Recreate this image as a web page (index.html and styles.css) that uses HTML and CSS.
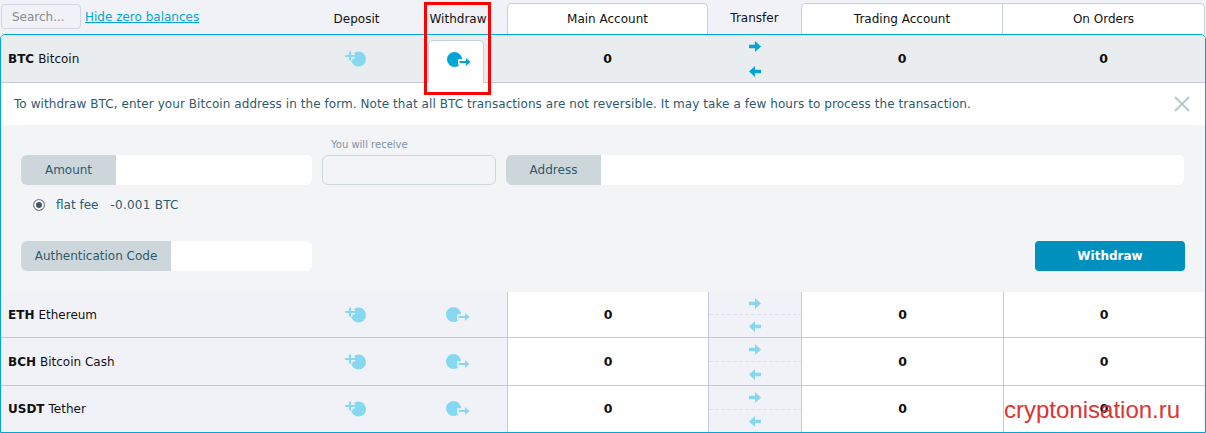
FILE: index.html
```html
<!DOCTYPE html>
<html lang="en">
<head>
<meta charset="utf-8">
<title>Balances</title>
<link rel="stylesheet" href="styles.css">
</head>
<body>
<svg class="defs" width="0" height="0">
  <symbol id="dep" viewBox="0 0 24 16">
    <circle cx="14.5" cy="8" r="7.5" fill="currentColor"/>
    <path d="M1 5h10M6 0.6v8.8" stroke="var(--halo)" stroke-width="5" fill="none"/>
    <path d="M1 5h10M6 0.6v8.8" stroke="currentColor" stroke-width="2.2" fill="none"/>
  </symbol>
  <symbol id="wd" viewBox="0 0 24 16">
    <circle cx="7.5" cy="7.5" r="7.5" fill="currentColor"/>
    <path d="M11 10h8" stroke="var(--halo)" stroke-width="5.4" fill="none"/>
    <path d="M12.5 10h7" stroke="currentColor" stroke-width="2" fill="none"/>
    <path d="M19 6.1l4.5 3.9-4.5 3.9z" fill="currentColor"/>
  </symbol>
  <symbol id="ar" viewBox="0 0 12 11">
    <path d="M0 3.7h6V0l6 5.5-6 5.5V7.3H0z" fill="currentColor"/>
  </symbol>
  <symbol id="al" viewBox="0 0 12 11">
    <path d="M12 3.7H6V0L0 5.5 6 11V7.3h6z" fill="currentColor"/>
  </symbol>
</svg>

<header class="head grid">
  <div class="tools"><input class="search" placeholder="Search..."><a class="hide" href="#">Hide zero balances</a></div>
  <div class="hc">Deposit</div>
  <div class="hc">Withdraw</div>
  <div class="tab">Main Account</div>
  <div class="hc hc-tr">Transfer</div>
  <div class="tab">Trading Account</div>
  <div class="tab tab-last">On Orders</div>
</header>

<main class="table">
  <div class="row grid row-open">
    <div class="coin"><b>BTC</b> Bitcoin</div>
    <div class="ico ico-dep"><svg class="i-coin"><use href="#dep"/></svg></div>
    <div class="ico"><div class="active-tab"><svg class="i-coin"><use href="#wd"/></svg></div></div>
    <div class="val">0</div>
    <div class="tr tr-open"><svg class="i-ar"><use href="#ar"/></svg><svg class="i-ar"><use href="#al"/></svg></div>
    <div class="val">0</div>
    <div class="val">0</div>
  </div>

  <div class="notice">
    <span>To withdraw BTC, enter your Bitcoin address in the form. Note that all BTC transactions are not reversible. It may take a few hours to process the transaction.</span>
    <svg class="close" viewBox="0 0 16 16"><path d="M1 1l14 14M15 1L1 15" stroke="currentColor" stroke-width="2" fill="none"/></svg>
  </div>

  <form class="form">
    <div class="f-row">
      <div class="group g-amount"><label class="lab lab-95">Amount</label><input class="inp"></div>
      <div class="recv"><span class="recv-l">You will receive</span><div class="recv-b"></div></div>
      <div class="group g-addr"><label class="lab lab-95">Address</label><input class="inp"></div>
    </div>
    <div class="fee"><span class="radio"></span><span>flat fee</span><span class="fee-v">-0.001 BTC</span></div>
    <div class="f-row f-end">
      <div class="group g-amount"><label class="lab lab-150">Authentication Code</label><input class="inp"></div>
      <button class="btn" type="button">Withdraw</button>
    </div>
  </form>

  <div class="row grid r46">
    <div class="coin"><b>ETH</b> Ethereum</div>
    <div class="ico ico-dep"><svg class="i-coin"><use href="#dep"/></svg></div>
    <div class="ico"><svg class="i-coin"><use href="#wd"/></svg></div>
    <div class="val cell">0</div>
    <div class="tr"><svg class="i-ar"><use href="#ar"/></svg><svg class="i-ar"><use href="#al"/></svg></div>
    <div class="val cell">0</div>
    <div class="val cell">0</div>
  </div>
  <div class="row grid r48">
    <div class="coin"><b>BCH</b> Bitcoin Cash</div>
    <div class="ico ico-dep"><svg class="i-coin"><use href="#dep"/></svg></div>
    <div class="ico"><svg class="i-coin"><use href="#wd"/></svg></div>
    <div class="val cell">0</div>
    <div class="tr"><svg class="i-ar"><use href="#ar"/></svg><svg class="i-ar"><use href="#al"/></svg></div>
    <div class="val cell">0</div>
    <div class="val cell">0</div>
  </div>
  <div class="row grid r46 row-last">
    <div class="coin"><b>USDT</b> Tether</div>
    <div class="ico ico-dep"><svg class="i-coin"><use href="#dep"/></svg></div>
    <div class="ico"><svg class="i-coin"><use href="#wd"/></svg></div>
    <div class="val cell">0</div>
    <div class="tr"><svg class="i-ar"><use href="#ar"/></svg><svg class="i-ar"><use href="#al"/></svg></div>
    <div class="val cell">0</div>
    <div class="val cell">0</div>
  </div>
</main>

<div class="redbox"></div>
<div class="mark">cryptonisation.ru</div>
</body>
</html>
```
FILE: styles.css
```css
* { box-sizing: border-box; }
html, body { margin: 0; padding: 0; }
body {
  width: 1206px; height: 433px; overflow: hidden; position: relative;
  background: #f1f2f8; color: #111;
  font: 12px "DejaVu Sans", Verdana, sans-serif;
}
.defs { position: absolute; }
.grid { display: grid; grid-template-columns: 303px 105px 98px 201px 93px 202px 201px; }

.head { height: 34px; grid-template-columns: 304px 105px 98px 201px 93px 202px 202px; }
.tools { display: flex; align-items: flex-start; padding: 4px 0 0 1px; }
.search {
  width: 80px; height: 25px; padding: 0 10px; margin: 0;
  border: 1px solid #d3d6e2; border-radius: 4px; background: #f1f2f8;
  font: 12px "DejaVu Sans", sans-serif;
}
.search::placeholder { color: #8a8a8a; }
.hide { margin: 6px 0 0 4px; color: #00a7d6; font-size: 12px; line-height: 15px; text-decoration: underline; }
.hc { display: flex; justify-content: center; padding-top: 12px; line-height: 15px; }
.hc-tr { padding: 11px 0 0; }
.tab {
  margin-top: 3px; background: #fff; border: 1px solid #c9cedb; border-bottom: 0;
  border-radius: 5px 5px 0 0; display: flex; justify-content: center; padding-top: 8px; line-height: 15px;
}
.tab + .tab { border-left: 0; border-top-left-radius: 0; }
.tab:has(+ .tab) { border-top-right-radius: 0; }

.table {
  height: 399px; border: 1px solid #00a7d6; border-radius: 5px 5px 0 0;
  background: #f1f2f8; overflow: hidden;
}
.row { font-size: 12px; border-bottom: 1px solid #c4c8d8; --halo: #f1f2f8; color: #111; }
.row > div { display: flex; align-items: center; }
.r46 { height: 46px; }
.r48 { height: 48px; }
.row-last { border-bottom: 0; }
.row-last > .val { padding-bottom: 2px; }
.row-open { height: 48px; background: #eaedf0; border-bottom-color: #c4cbd6; --halo: #eaedf0; }
.coin { padding-left: 7px; }
.coin b { margin-right: 4px; }
.row > .ico { justify-content: center; color: #85d8ef; }
.row > .ico-dep { padding-right: 2px; }
.i-coin { width: 24px; height: 16px; }
.row-open > .ico { position: relative; }
.row > div > .active-tab {
  position: absolute; left: 19px; top: 5px; width: 56px; height: 43px;
  background: #fff; border: 1px solid #c9cedb; border-bottom: 0; border-radius: 5px 5px 0 0;
  color: #00a7d6; --halo: #fff; display: flex; align-items: center; justify-content: center; padding: 0 0 4px 5px;
}
.val { justify-content: center; font-weight: 700; font-size: 12.5px; }
.row > .cell { background: #fff; border-left: 1px solid #c4c8d8; }
.row > .tr {
  flex-direction: column; justify-content: space-between; padding: 6px 0 5px;
  color: #85d8ef; border-left: 1px solid #c4c8d8;
  background: repeating-linear-gradient(to right, #e0e3ec 0 4px, transparent 4px 6px) center / 100% 1px no-repeat;
}
.row > .tr-open { color: #00a7d6; border: 0; background: none; padding: 6px 0 5px; }
.i-ar { width: 12px; height: 11px; flex: none; }

.notice {
  height: 42px; background: #fff; display: flex; align-items: center; justify-content: space-between;
  padding: 0 15px 0 13px; color: #2d5a6c; letter-spacing: .067px;
}
.close { width: 16px; height: 16px; color: #b9c8cf; }

.form { height: 167px; background: #f3f4f6; padding: 14px 20px 0; }
.f-row { display: flex; align-items: flex-end; gap: 10px; }
.group { display: flex; height: 30px; border-radius: 6px; overflow: hidden; background: #fff; }
.g-amount { width: 291px; }
.g-addr { width: 678px; }
.lab {
  display: flex; align-items: center; justify-content: center; background: #cdd7db; color: #2d5a6c; flex: none;
}
.lab-95 { width: 95px; }
.lab-150 { width: 150px; }
.inp { flex: 1; min-width: 0; border: 0; background: #fff; padding: 0; margin: 0; }
.recv { width: 174px; display: flex; flex-direction: column; }
.recv-l { font-size: 10px; color: #7f93a2; padding-left: 9px; line-height: 12px; margin-bottom: 4px; }
.recv-b { height: 30px; border: 1px solid #cdd7db; border-radius: 6px; background: #f3f4f6; }
.fee { display: flex; align-items: center; height: 38px; padding: 2px 0 0 12px; color: #2d5a6c; margin-bottom: 18px; }
.radio {
  width: 12px; height: 12px; border-radius: 50%; background: #3f5866;
  border: 1px solid #7c8a92; box-shadow: inset 0 0 0 2px #fff; margin-right: 11px;
}
.fee-v { margin-left: 12px; letter-spacing: .25px; }
.f-end { justify-content: space-between; }
.btn {
  width: 150px; height: 30px; margin: 0 0 0 auto; border: 0; border-radius: 4px; background: #0090bd;
  color: #fff; font: 700 12px "DejaVu Sans", sans-serif;
}

.redbox { position: absolute; left: 424px; top: 2px; width: 67px; height: 93px; border: 3px solid #f00; pointer-events: none; }
.mark { position: absolute; left: 1004px; top: 396px; color: #dc3434; font: 24px/28px "Liberation Sans", sans-serif; }
```
